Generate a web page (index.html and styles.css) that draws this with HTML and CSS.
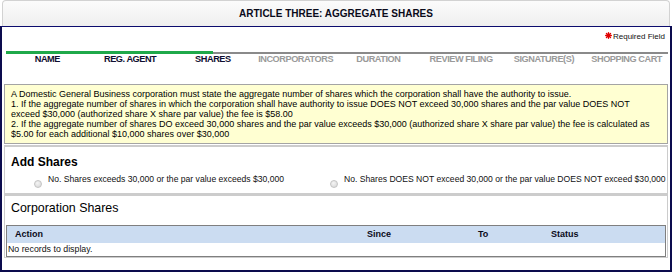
FILE: index.html
```html
<!DOCTYPE html>
<html>
<head>
<meta charset="utf-8">
<link rel="stylesheet" href="styles.css">
</head>
<body>
<div class="page-header">ARTICLE THREE: AGGREGATE SHARES</div>
<div class="frame">
  <div class="required">
    <svg class="star" width="7" height="7" viewBox="0 0 8 8"><g stroke="#e00000" stroke-width="1.6" stroke-linecap="round"><line x1="4" y1="0.8" x2="4" y2="7.2"/><line x1="0.8" y1="4" x2="7.2" y2="4"/><line x1="1.7" y1="1.7" x2="6.3" y2="6.3"/><line x1="6.3" y1="1.7" x2="1.7" y2="6.3"/></g><circle cx="4" cy="4" r="2" fill="#e00000"/></svg>
    <span>Required Field</span>
  </div>
  <div class="progress">
    <div class="track">
      <div class="done"></div>
      <div class="todo"></div>
    </div>
    <div class="steps">
      <span class="step on">NAME</span>
      <span class="step on">REG. AGENT</span>
      <span class="step on">SHARES</span>
      <span class="step">INCORPORATORS</span>
      <span class="step">DURATION</span>
      <span class="step">REVIEW FILING</span>
      <span class="step">SIGNATURE(S)</span>
      <span class="step">SHOPPING CART</span>
    </div>
  </div>
  <div class="info">
    A Domestic General Business corporation must state the aggregate number of shares which the corporation shall have the authority to issue.<br>
    1. If the aggregate number of shares in which the corporation shall have authority to issue DOES NOT exceed 30,000 shares and the par value DOES NOT exceed $30,000 (authorized share X share par value) the fee is $58.00<br>
    2. If the aggregate number of shares DO exceed 30,000 shares and the par value exceeds $30,000 (authorized share X share par value) the fee is calculated as $5.00 for each additional $10,000 shares over $30,000
  </div>
  <div class="section add">
    <div class="sec-title bold">Add Shares</div>
    <div class="radios">
      <label class="radio"><span class="dot"></span><span>No. Shares exceeds 30,000 or the par value exceeds $30,000</span></label>
      <label class="radio"><span class="dot"></span><span>No. Shares DOES NOT exceed 30,000 or the par value DOES NOT exceed $30,000</span></label>
    </div>
  </div>
  <div class="section corp">
    <div class="sec-title">Corporation Shares</div>
    <div class="grid">
      <div class="grid-head">
        <span>Action</span>
        <span>Since</span>
        <span>To</span>
        <span>Status</span>
      </div>
      <div class="grid-empty">No records to display.</div>
    </div>
  </div>
</div>
</body>
</html>
```

FILE: styles.css
```css
* { box-sizing: border-box; }
html, body { margin: 0; padding: 0; background: #ffffff; }
body {
  font-family: "Liberation Sans", Arial, sans-serif;
  color: #000;
  width: 672px;
  height: 273px;
  overflow: hidden;
}
.page-header {
  height: 26px;
  margin: 0 2px;
  border: 1px solid #d2d2d2;
  border-bottom: none;
  border-radius: 4px 4px 0 0;
  background: linear-gradient(#fbfbfb, #efefef);
  text-align: center;
  font-weight: bold;
  font-size: 10px;
  line-height: 25px;
  color: #0a0a1a;
}
.frame {
  border: 2px solid #0c0c4e;
  border-top: 1px solid #0c0c6e;
  padding: 0 2px 12px 2px;
}
.required {
  height: 18px;
  display: flex;
  justify-content: flex-end;
  align-items: center;
  gap: 1px;
  padding-right: 3px;
  font-size: 8px;
  color: #111;
}
.star { display: block; margin-top: -2px; }
.progress { margin: 6px 0 0 2px; }
.track {
  display: flex;
  align-items: center;
  height: 3px;
}
.done { width: 207px; height: 3px; background: #1fa94a; }
.todo { flex: 1; height: 2px; background: #8a8a8a; margin-top: 1px; }
.steps {
  display: grid;
  grid-template-columns: repeat(8, 1fr);
  font-size: 9.2px;
  font-weight: bold;
  line-height: 10px;
  letter-spacing: -0.45px;
  color: #9a9a9a;
}
.step { text-align: center; white-space: nowrap; }
.step.on { color: #0e0e30; }
.info {
  margin: 20px 0 0 0;
  border: 1px solid #a4a4a4;
  background: #ffffd2;
  padding: 4px 10px 4px 6px;
  font-size: 9px;
  line-height: 10px;
  color: #000;
}
.section {
  border: 1px solid #cccccc;
  border-top-width: 2px;
}
.add {
  margin-top: 1px;
  padding: 8px 0 5px 0;
}
.sec-title {
  font-size: 12.4px;
  line-height: 14px;
  padding-left: 6px;
  color: #000;
}
.sec-title.bold { font-weight: bold; font-size: 12px; }
.radios {
  display: grid;
  grid-template-columns: 296px 1fr;
  margin-top: 5px;
  padding-left: 29px;
  font-size: 8.6px;
  line-height: 11px;
  color: #111;
}
.radio { display: flex; align-items: flex-start; gap: 6px; white-space: nowrap; }
.dot {
  width: 8px;
  height: 8px;
  margin-top: 6px;
  border-radius: 50%;
  border: 1px solid #c4c4c4;
  background: radial-gradient(circle at 40% 35%, #f4f4f4, #d6d6d6);
  flex: none;
}
.corp {
  border-top-width: 2px;
  padding: 5px 1px 0 1px;
}
.corp .sec-title { padding-left: 5px; margin-bottom: 10px; }
.grid {
  border: 1px solid #7f7f7f;
}
.grid-head {
  display: grid;
  grid-template-columns: 352px 111px 73px 1fr;
  background: #cbdcf1;
  height: 17px;
  line-height: 17px;
  font-size: 9px;
  font-weight: bold;
  color: #0a0a1a;
}
.grid-head span { padding-left: 8px; }
.grid-empty {
  height: 13px;
  line-height: 13px;
  font-size: 8.8px;
  padding-left: 1px;
  color: #111;
}
```
